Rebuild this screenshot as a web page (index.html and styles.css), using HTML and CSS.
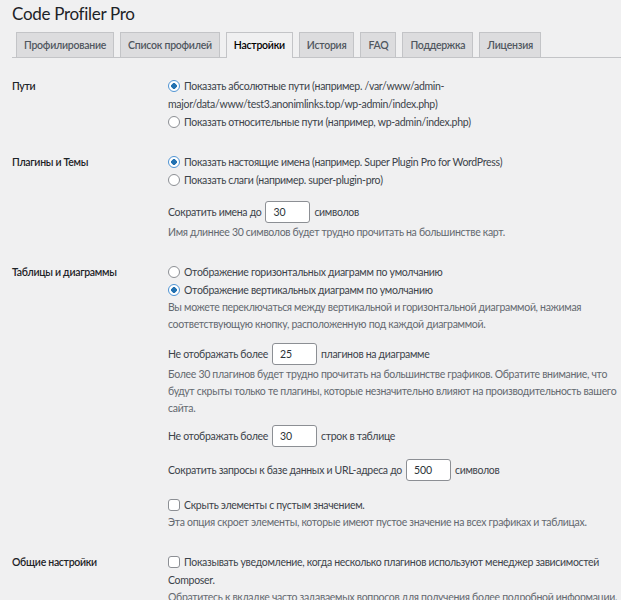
FILE: index.html
```html
<!DOCTYPE html>
<html lang="ru">
<head>
<meta charset="utf-8">
<title>Code Profiler Pro</title>
<link rel="stylesheet" href="styles.css">
</head>
<body>
<div class="wrap">
  <h1 class="title">Code Profiler Pro</h1>
  <nav class="tabs">
    <a class="tab">Профилирование</a>
    <a class="tab">Список профилей</a>
    <a class="tab active">Настройки</a>
    <a class="tab">История</a>
    <a class="tab">FAQ</a>
    <a class="tab">Поддержка</a>
    <a class="tab">Лицензия</a>
  </nav>

  <div class="form">
    <section class="row">
      <div class="label">Пути</div>
      <div class="field">
        <label class="opt"><input type="radio" name="paths" checked>Показать абсолютные пути (например. /var/www/admin-major/data/www/test3.anonimlinks.top/wp-admin/index.php)</label>
        <label class="opt"><input type="radio" name="paths">Показать относительные пути (например, wp-admin/index.php)</label>
      </div>
    </section>

    <section class="row">
      <div class="label">Плагины и Темы</div>
      <div class="field">
        <label class="opt"><input type="radio" name="names" checked>Показать настоящие имена (например. Super Plugin Pro for WordPress)</label>
        <label class="opt"><input type="radio" name="names">Показать слаги (например. super-plugin-pro)</label>
        <div class="inline inline-first">Сократить имена до <input class="num" type="text" value="30"> символов</div>
        <p class="desc">Имя длиннее 30 символов будет трудно прочитать на большинстве карт.</p>
      </div>
    </section>

    <section class="row">
      <div class="label">Таблицы и диаграммы</div>
      <div class="field">
        <label class="opt"><input type="radio" name="charts">Отображение горизонтальных диаграмм по умолчанию</label>
        <label class="opt"><input type="radio" name="charts" checked>Отображение вертикальных диаграмм по умолчанию</label>
        <p class="desc">Вы можете переключаться между вертикальной и горизонтальной диаграммой, нажимая соответствующую кнопку, расположенную под каждой диаграммой.</p>
        <div class="inline gap-a">Не отображать более <input class="num" type="text" value="25"> плагинов на диаграмме</div>
        <p class="desc">Более 30 плагинов будет трудно прочитать на большинстве графиков. Обратите внимание, что будут скрыты только те плагины, которые незначительно влияют на производительность вашего сайта.</p>
        <div class="inline gap-d">Не отображать более <input class="num" type="text" value="30"> строк в таблице</div>
        <div class="inline gap-b">Сократить запросы к базе данных и URL-адреса до <input class="num" type="text" value="500"> символов</div>
        <label class="opt gap-c"><input type="checkbox">Скрыть элементы с пустым значением.</label>
        <p class="desc">Эта опция скроет элементы, которые имеют пустое значение на всех графиках и таблицах.</p>
      </div>
    </section>

    <section class="row">
      <div class="label">Общие настройки</div>
      <div class="field">
        <label class="opt"><input type="checkbox">Показывать уведомление, когда несколько плагинов используют менеджер зависимостей Composer.</label>
        <p class="desc">Обратитесь к вкладке часто задаваемых вопросов для получения более подробной информации.</p>
      </div>
    </section>
  </div>
</div>
</body>
</html>
```

FILE: styles.css
```css
html, body {
  margin: 0;
  padding: 0;
  background: #f0f0f1;
}

body {
  font-family: Lato, "Liberation Sans", Arial, sans-serif;
  font-size: 10.5px;
  letter-spacing: -0.3px;
  line-height: 18px;
  color: #3c434a;
}

.wrap {
  padding: 0 0 0 12px;
}

.title {
  margin: 0;
  padding-top: 2px;
  font-size: 17px;
  letter-spacing: -0.3px;
  font-weight: 400;
  line-height: 24px;
  color: #1d2327;
}

.tabs {
  display: flex;
  gap: 6px;
  margin-top: 6px;
  padding-left: 4px;
  border-bottom: 1px solid #c3c4c7;
}

.tab {
  display: block;
  white-space: nowrap;
  padding: 4px 7px;
  line-height: 16px;
  font-size: 10.5px;
  letter-spacing: -0.25px;
  font-weight: 600;
  color: #50575e;
  background: #dcdcde;
  border: 1px solid #c3c4c7;
  border-bottom: none;
}

.tab.active {
  background: #f0f0f1;
  color: #000;
  margin-bottom: -1px;
  padding-bottom: 5px;
}

.form {
  margin-top: 8px;
}

.row {
  display: grid;
  grid-template-columns: 156px 452px;
  padding: 11px 0;
}

.label {
  font-weight: 600;
  color: #1d2327;
}

.field {
  min-width: 0;
}

.opt {
  display: block;
}

.opt input {
  appearance: none;
  -webkit-appearance: none;
  width: 12px;
  height: 12px;
  margin: 0 4px 0 0;
  vertical-align: -2px;
  border: 1px solid #8c8f94;
  background: #fff;
  box-sizing: border-box;
}

.opt input[type="radio"] {
  border-radius: 50%;
}

.opt input[type="radio"]:checked {
  border-color: #4f94d4;
  background: radial-gradient(circle, #2271b1 0 2.6px, #fff 3px);
}

.opt input[type="checkbox"] {
  border-radius: 3px;
}

.inline {
  display: flex;
  align-items: center;
  gap: 4px;
}

.inline-first {
  margin-top: 12px;
}

.gap-a {
  margin-top: 10px;
}

.gap-d {
  margin-top: 8px;
}

.gap-b {
  margin-top: 12px;
}

.gap-c {
  margin-top: 15px;
}

.num {
  box-sizing: border-box;
  width: 45px;
  height: 22px;
  margin: 0;
  padding: 0 7px;
  font: inherit;
  color: #2c3338;
  background: #fff;
  border: 1px solid #8c8f94;
  border-radius: 3px;
}

.desc {
  margin: 0;
  line-height: 17px;
  color: #646970;
}

.inline + .desc {
  margin-top: 1px;
}
```
